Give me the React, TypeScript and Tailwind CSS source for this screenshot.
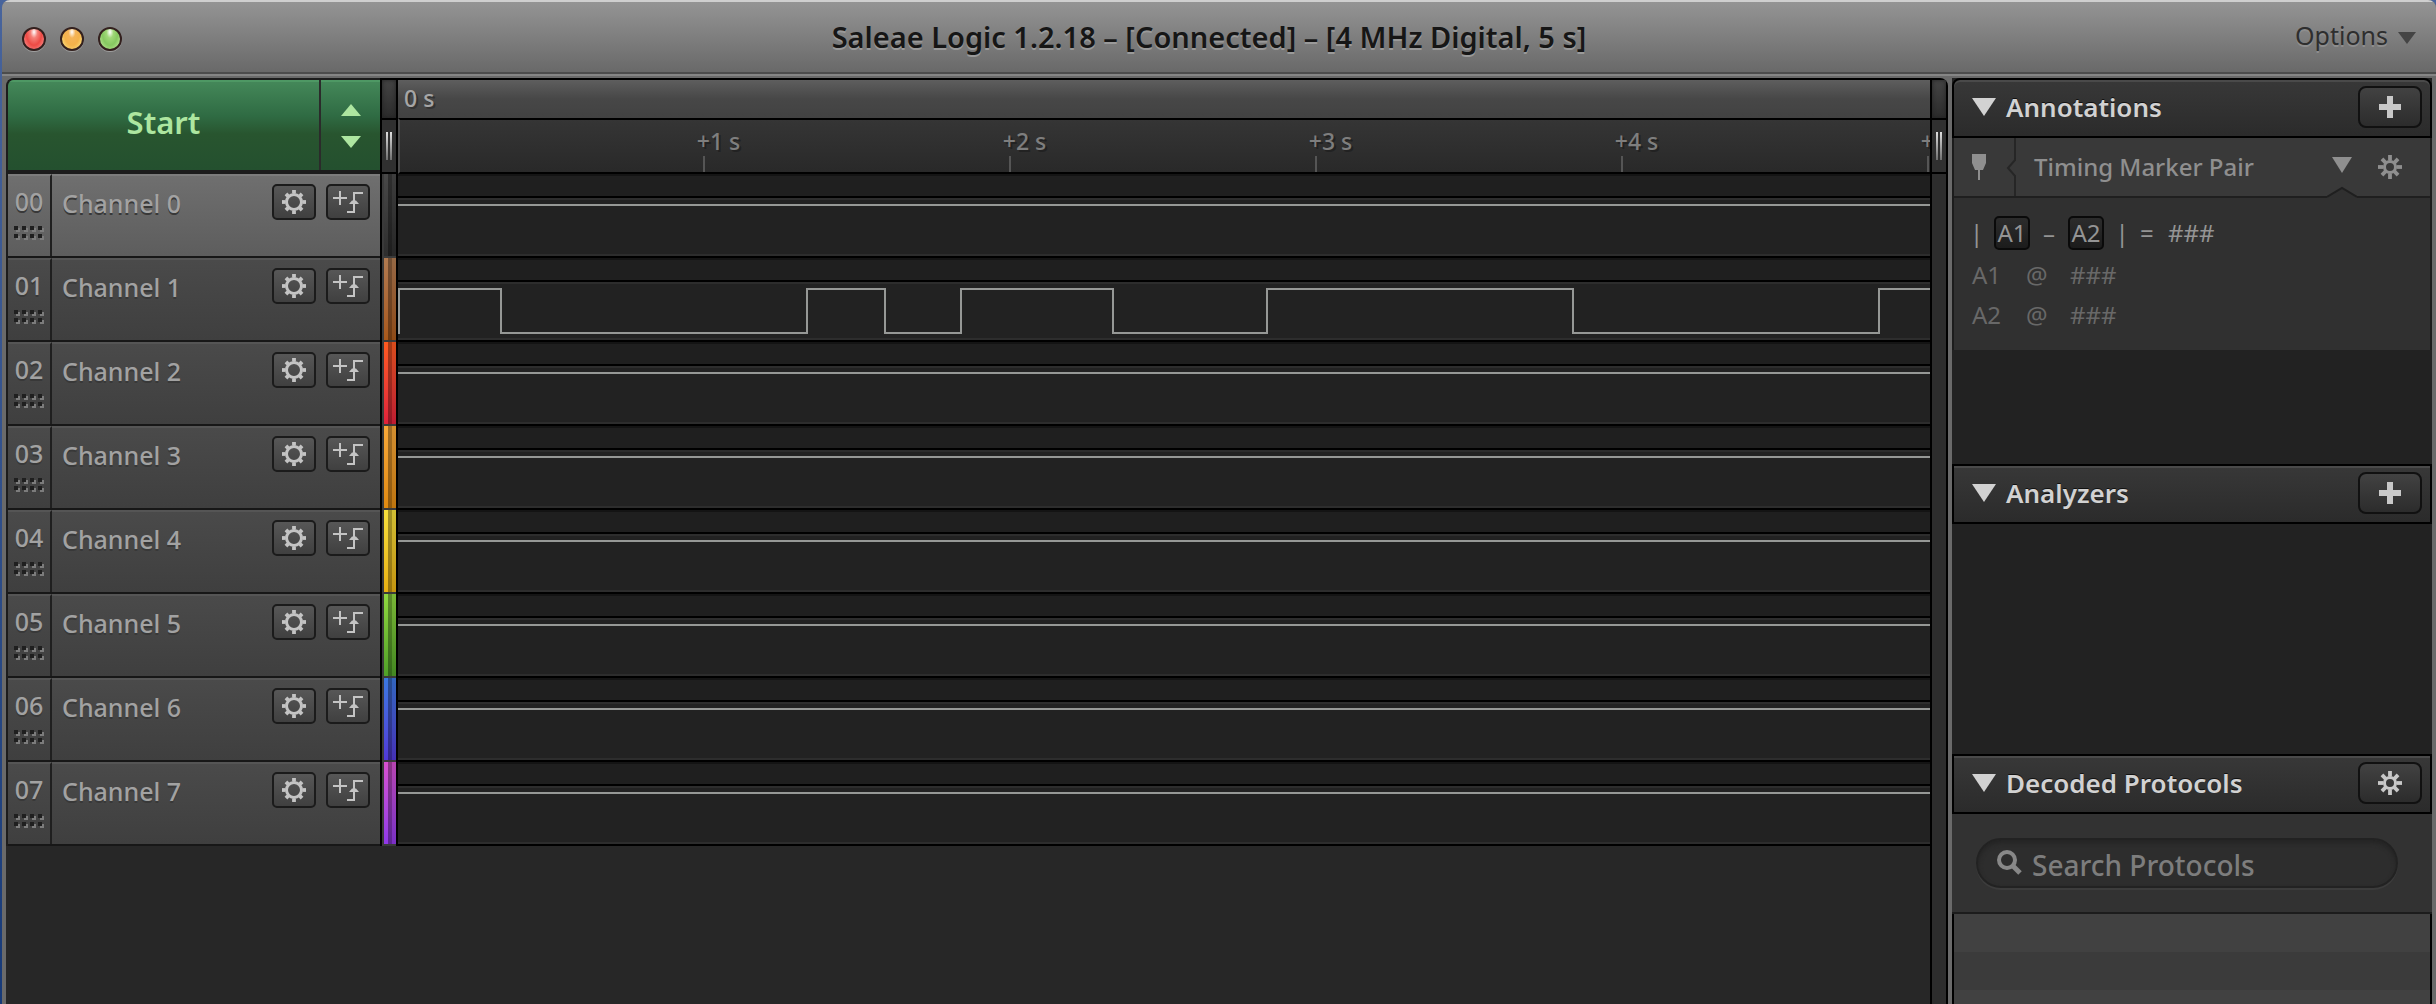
import React from "react";

const FONT = "font-['Noto_Sans','Open_Sans',sans-serif]";

const channels = [
  { id: "00", name: "Channel 0", color: "bg-linear-to-b from-[#484848] to-[#2e2e2e]", selected: true },
  { id: "01", name: "Channel 1", color: "bg-linear-to-b from-[#b07a50] to-[#a8581a]" },
  { id: "02", name: "Channel 2", color: "bg-linear-to-b from-[#ff5a20] to-[#e0203a]" },
  { id: "03", name: "Channel 3", color: "bg-linear-to-b from-[#f8a838] to-[#e08a10]" },
  { id: "04", name: "Channel 4", color: "bg-linear-to-b from-[#f6e03c] to-[#e8b010]" },
  { id: "05", name: "Channel 5", color: "bg-linear-to-b from-[#90d840] to-[#4fa028]" },
  { id: "06", name: "Channel 6", color: "bg-linear-to-b from-[#3a78e0] to-[#5038d8]" },
  { id: "07", name: "Channel 7", color: "bg-linear-to-b from-[#d850d0] to-[#9038e8]" },
];

const pulsePath =
  "M1 76V31H103V75H409V31H487V75H563V31H715V75H869V31H1175V75H1481V31H1532";

const ticks = ["+1 s", "+2 s", "+3 s", "+4 s", "+5 s"];

function Gear({ hole, outer, color }: { hole: number; outer: number; color: string }) {
  return (
    <svg viewBox="-12 -12 24 24" className={`size-6 ${color}`} aria-hidden="true">
      <circle r={(hole + outer) / 2} fill="none" stroke="currentColor" strokeWidth={outer - hole} />
      {Array.from({ length: 8 }, (_, i) => (
        <rect
          key={i}
          x="-1.9"
          y={i % 2 ? -11.4 : -12}
          width="3.8"
          height={12.5 - outer}
          fill="currentColor"
          transform={`rotate(${i * 45})`}
        />
      ))}
    </svg>
  );
}

function Trigger() {
  return (
    <svg viewBox="0 0 32 24" className="h-6 w-8" fill="none" stroke="#c4c4c4" strokeWidth="2" aria-hidden="true">
      <path d="M1 8H15M8 1V15M15 22H22V3H31" />
      <path d="M17 14L20 10.500H24L27 14Z" fill="#c4c4c4" stroke="none" />
    </svg>
  );
}

function Grip() {
  return (
    <svg viewBox="0 0 30 14" className="h-[14px] w-[30px]" shapeRendering="crispEdges" aria-hidden="true">
      {[0, 8, 16, 24].map((x) =>
        [0, 8].map((y) => (
          <g key={`${x}-${y}`}>
            <rect x={x + 2} y={y + 2} width="4" height="4" fill="#7c7c7c" />
            <rect x={x} y={y} width="4" height="4" fill="#1f1f1f" />
          </g>
        )),
      )}
    </svg>
  );
}

function Caret({ size, up = false }: { size: string; up?: boolean }) {
  return (
    <svg viewBox="0 0 20 12" preserveAspectRatio="none" className={size} fill="currentColor" aria-hidden="true">
      <path d={up ? "M10 0L20 12H0Z" : "M0 0H20L10 12Z"} />
    </svg>
  );
}

function TitleBar() {
  const light = "size-6 rounded-full border-2 border-[#33201e] shadow-[0_1px_0_#a0a0a0]";
  return (
    <header className="grid h-[78px] shrink-0 grid-cols-[1fr_auto_1fr] border-t-2 border-[#cfcfcf] bg-[linear-gradient(#949494,#696969_70px,#4c4c4c_70px,#4c4c4c_72px,#858585_72px,#858585_74px,#6a6a6a_74px)] pb-[6px]">
      <div className="flex items-center gap-[14px] pl-5 pt-1">
        <button aria-label="Close" className={`${light} bg-[radial-gradient(ellipse_at_50%_15%,#fff_0%,#f58078_25%,#ee4a44_55%,#f9a0a0_100%)]`} />
        <button aria-label="Minimize" className={`${light} bg-[radial-gradient(ellipse_at_50%_15%,#fff_0%,#f5b458_25%,#f4b24a_55%,#fbee90_100%)]`} />
        <button aria-label="Zoom" className={`${light} bg-[radial-gradient(ellipse_at_50%_15%,#fff_0%,#a0d878_25%,#86c860_55%,#cff0a8_100%)]`} />
      </div>
      <h1 className="mr-5 self-center text-[29px] font-semibold text-[#161616] [text-shadow:0_2px_0_#9a9a9a]">
        Saleae Logic 1.2.18 – [Connected] – [4 MHz Digital, 5 s]
      </h1>
      <button className="flex items-center gap-[10px] justify-self-end pb-[2px] pr-5 text-[25px] text-[#2e2e2e] [text-shadow:0_2px_0_#8e8e8e]">
        Options
        <Caret size="mt-1 h-3 w-[18px] text-[#444444]" />
      </button>
    </header>
  );
}

function SmallButton({ label, children }: { label: string; children: React.ReactNode }) {
  return (
    <button
      aria-label={label}
      className="flex h-9 w-11 items-center justify-center rounded-[5px] border-2 border-[#1b1b1b] bg-linear-to-b from-[#575757] to-[#404040]"
    >
      {children}
    </button>
  );
}

function ChannelRow({ id, name, selected }: { id: string; name: string; selected?: boolean }) {
  const fill = selected
    ? "bg-linear-to-b from-[#6f6f6f] to-[#5d5d5d] border-t-[#7c7c7c]"
    : "bg-linear-to-b from-[#4a4a4a] to-[#3f3f3f] border-t-[#555555]";
  return (
    <li className="flex h-[84px] border-b-2 border-[#171717] text-[25px] leading-[34px] font-medium text-[#a2a2a2] [text-shadow:0_2px_0_#383838]">
      <div className={`flex w-11 flex-col items-center gap-2 border-t-2 border-r-2 border-r-[#1f1f1f] pt-2 ${fill}`}>
        <span>{id}</span>
        <Grip />
      </div>
      <div className={`flex flex-1 items-start border-t-2 pl-[10px] pr-[10px] pt-2 ${fill}`}>
        <span className="flex-1 pt-[2px]">{name}</span>
        <div className="flex gap-[10px]">
          <SmallButton label={`${name} settings`}>
            <Gear hole={6} outer={9} color="text-[#c4c4c4]" />
          </SmallButton>
          <SmallButton label={`${name} trigger`}>
            <Trigger />
          </SmallButton>
        </div>
      </div>
    </li>
  );
}

function Handle() {
  return (
    <>
      <div className="h-[38px] bg-linear-to-b from-[#444] to-[#2b2b2b] shadow-[inset_0_0_4px_#222]" />
      <div className="flex h-14 justify-center gap-[2px] border-y-2 border-black bg-[#303030] pt-3">
        <div className="h-7 w-[2px] bg-linear-to-b from-[#e0e0e0] to-[#707070]" />
        <div className="h-7 w-[2px] bg-linear-to-b from-[#e0e0e0] to-[#707070]" />
      </div>
    </>
  );
}

function Sidebar() {
  const green =
    "bg-[linear-gradient(#45895a,#2f6b43_40%,#28552f_60%,#24502f)] shadow-[inset_0_2px_0_#4e9864]";
  return (
    <section className="flex w-[374px] shrink-0 flex-col">
      <div className="flex h-24 overflow-hidden rounded-tl-lg border-y-2 border-b-4 border-l-2 border-[#1c1c1c] text-[#ade6a0]">
        <button className={`flex-1 border-r-2 border-[#2b2b2b] pb-[6px] text-[31px] font-semibold ${green}`}>Start</button>
        <div className={`flex w-[59px] flex-col items-center justify-center gap-5 pt-[2px] ${green}`}>
          <button aria-label="Increase duration" className="flex"><Caret up size="h-3 w-5" /></button>
          <button aria-label="Decrease duration" className="flex"><Caret size="h-3 w-5" /></button>
        </div>
      </div>
      <ul className="border-l-2 border-[#1c1c1c]">
        {channels.map((c) => (
          <ChannelRow key={c.id} id={c.id} name={c.name} selected={c.selected} />
        ))}
      </ul>
    </section>
  );
}

function Track({ pulse }: { pulse: boolean }) {
  return (
    <div className="relative h-[84px] border-b-2 border-black bg-[#222222]">
      <div className="h-6 border-t-2 border-b-2 border-t-[#141414] border-b-black bg-[#1f1f1f]" />
      <div className="h-[58px] border-y-2 border-[#2d2d2d]" />
      <svg
        viewBox="0 0 1532 84"
        preserveAspectRatio="none"
        className="absolute inset-x-0 top-0 h-[84px] w-full"
        fill="none"
        stroke="#969896"
        strokeWidth="2"
        shapeRendering="crispEdges"
        aria-hidden="true"
      >
        <path vectorEffect="non-scaling-stroke" d={pulse ? pulsePath : "M0 31H1532"} />
      </svg>
    </div>
  );
}

function Timeline() {
  return (
    <section className="flex min-w-0 flex-1 rounded-tr-lg border-t-2 border-r-2 border-black">
      <div className="w-[18px] shrink-0">
        <div className="border-x-2 border-black">
          <Handle />
          {channels.map((c) => (
            <div key={c.id} className="flex h-[84px] border-b-2 border-[#3a3a3a] bg-[#3a3a3a] pl-[2px]">
              <div className={`flex flex-1 ${c.color}`}>
                <div className="ml-1 w-1 bg-black/35" />
                <div className="flex-1 bg-black/15" />
              </div>
            </div>
          ))}
        </div>
      </div>
      <div className="min-w-0 flex-1">
        <div className="h-[38px] bg-[linear-gradient(#5e5e5e,#474747_50%,#424242)] pl-[6px] text-[23px] leading-[36px] font-medium text-[#a6a6a6] [text-shadow:2px_2px_0_#333]">
          0 s
        </div>
        <div className="flex h-14 overflow-hidden border-y-2 border-l-2 border-y-black border-l-[#4c4c4c] bg-linear-to-b from-[#353535] to-[#292929]">
          <div className="w-[19.4%] shrink-0" />
          {ticks.map((t) => (
            <div key={t} className="w-[20%] shrink-0">
              <div className="h-9 whitespace-nowrap pt-1 text-[23px] leading-[34px] font-medium text-[#7e7e7e] [text-shadow:2px_2px_0_#222]">{t}</div>
              <div className="ml-[6px] h-4 w-[2px] bg-[#555]" />
            </div>
          ))}
        </div>
        {channels.map((c) => (
          <Track key={c.id} pulse={c.id === "01"} />
        ))}
      </div>
      <div className="w-4 shrink-0 border-l-2 border-black bg-[#2d2d2d]">
        <Handle />
      </div>
    </section>
  );
}

function PanelHeader({ title, action, children, first }: { title: string; action: string; children: React.ReactNode; first?: boolean }) {
  return (
    <div
      className={`flex h-[60px] items-start border-2 border-black bg-linear-to-b from-[#383838] to-[#2b2b2b] pl-[18px] pr-2 shadow-[inset_0_2px_0_#4a4a4a] ${first ? "rounded-t-lg" : ""}`}
    >
      <button className="flex flex-1 items-center gap-[10px] pt-[10px] text-[26px] leading-[34px] font-semibold text-[#d2d2d2] [text-shadow:0_-1px_0_#111]">
        <Caret size="h-[18px] w-6" />
        {title}
      </button>
      <button
        aria-label={action}
        className="mt-[6px] flex h-[42px] w-16 items-center justify-center rounded-lg border-2 border-[#111] bg-linear-to-b from-[#424242] to-[#2c2c2c]"
      >
        {children}
      </button>
    </div>
  );
}

function Plus() {
  return (
    <svg viewBox="0 0 22 22" className="size-[22px] text-[#c8c8c8]" fill="currentColor" aria-hidden="true">
      <path d="M8 0H14V8H22V14H14V22H8V14H0V8H8Z" />
    </svg>
  );
}

function MarkerTag({ children }: { children: React.ReactNode }) {
  return (
    <span className="flex h-[34px] w-9 items-center justify-center rounded-[5px] border-2 border-[#0a0a0a] bg-linear-to-b from-[#2c2c2c] to-[#1c1c1c]">{children}</span>
  );
}

function SidePanel() {
  return (
    <aside className="flex w-[480px] shrink-0 flex-col bg-[#222222]">
      <PanelHeader first title="Annotations" action="Add annotation">
        <Plus />
      </PanelHeader>
      <div className="border-x-2 border-[#1c1c1c] bg-[#303030]">
        <div className="relative flex h-[60px] items-center border-b-2 border-[#1f1f1f] bg-[#393939] text-[#8f8f8f]">
          <div className="relative flex h-full w-[62px] items-center border-r-2 border-[#262626] pl-[18px]">
            <svg viewBox="0 0 14 26" className="h-[26px] w-[14px]" fill="currentColor" aria-hidden="true">
              <path d="M0 0H14V9L11 16H8V26H6V16H3L0 9Z" />
            </svg>
            <svg viewBox="0 0 10 20" className="absolute -right-[2px] top-5 h-5 w-[10px]" aria-hidden="true">
              <path d="M10 1L2 10L10 19" fill="#393939" stroke="#262626" strokeWidth="2" />
            </svg>
          </div>
          <span className="flex-1 pl-[18px] text-[24px] font-medium">Timing Marker Pair</span>
          <button aria-label="Expand marker pair" className="flex"><Caret size="mb-1 h-4 w-5" /></button>
          <button aria-label="Marker pair settings" className="ml-[26px] mr-7 flex">
            <Gear hole={4} outer={7} color="text-[#8f8f8f]" />
          </button>
          <svg viewBox="0 0 30 12" className="absolute -bottom-[2px] right-[73px] h-3 w-[30px]" aria-hidden="true">
            <path d="M0 12V11L15 2L30 11V12Z" fill="#303030" />
            <path d="M0 11L15 2L30 11" fill="none" stroke="#1f1f1f" strokeWidth="2" />
          </svg>
        </div>
        <div className="flex h-[152px] flex-col gap-[6px] px-[18px] pt-[18px] text-[24px] leading-[34px] text-[#686868]">
          <div className="mb-[2px] flex items-center text-[#949494]">
            <span className="w-[22px] -indent-[2px]">|</span>
            <MarkerTag>A1</MarkerTag>
            <span className="w-[38px] text-center">–</span>
            <MarkerTag>A2</MarkerTag>
            <span className="w-9 text-center">|</span>
            <span className="w-7">=</span>
            <span>###</span>
          </div>
          {["A1", "A2"].map((m) => (
            <div key={m} className="flex">
              <span className="w-[54px]">{m}</span>
              <span className="w-11">@</span>
              <span>###</span>
            </div>
          ))}
        </div>
      </div>
      <div className="h-[114px]" />
      <PanelHeader title="Analyzers" action="Add analyzer">
        <Plus />
      </PanelHeader>
      <div className="h-[230px]" />
      <PanelHeader title="Decoded Protocols" action="Protocol settings">
        <Gear hole={4} outer={7} color="text-[#c8c8c8]" />
      </PanelHeader>
      <div className="border-b-2 border-[#1c1c1c] bg-[#323232] px-6 py-6 pr-[34px]">
        <label className="flex h-[50px] items-center gap-[10px] rounded-full border-2 border-[#222] bg-[#2d2d2d] pl-[18px] text-[#888] shadow-[inset_0_3px_4px_#242424,0_2px_0_#3c3c3c]">
          <svg viewBox="0 0 26 26" className="size-[26px]" fill="none" stroke="currentColor" strokeWidth="4" aria-hidden="true">
            <circle cx="11" cy="10" r="8" />
            <path d="M17 16L24 23" strokeWidth="5" />
          </svg>
          <input
            aria-label="Search Protocols"
            placeholder="Search Protocols"
            className="min-w-0 flex-1 bg-transparent pt-[4px] text-[28px] leading-[38px] font-medium outline-none placeholder:text-[#7d7d7d]"
          />
        </label>
      </div>
      <div className="min-h-0 flex-1 border-x-2 border-black bg-[repeating-linear-gradient(#414141_0,#414141_38px,#3b3b3b_38px,#3b3b3b_76px)]" />
    </aside>
  );
}

export default function App() {
  return (
    <div className={`h-screen overflow-hidden bg-linear-to-b from-[#48649c] to-[#173a78] pl-[2px] ${FONT}`}>
      <div className="flex h-full flex-col overflow-hidden rounded-t-lg bg-[#6a6a6a]">
        <TitleBar />
        <main className="flex min-h-0 flex-1 gap-1 px-1">
          <div className="flex min-w-0 flex-1 overflow-hidden rounded-t-lg bg-[#272727]">
            <Sidebar />
            <Timeline />
          </div>
          <SidePanel />
        </main>
      </div>
    </div>
  );
}
